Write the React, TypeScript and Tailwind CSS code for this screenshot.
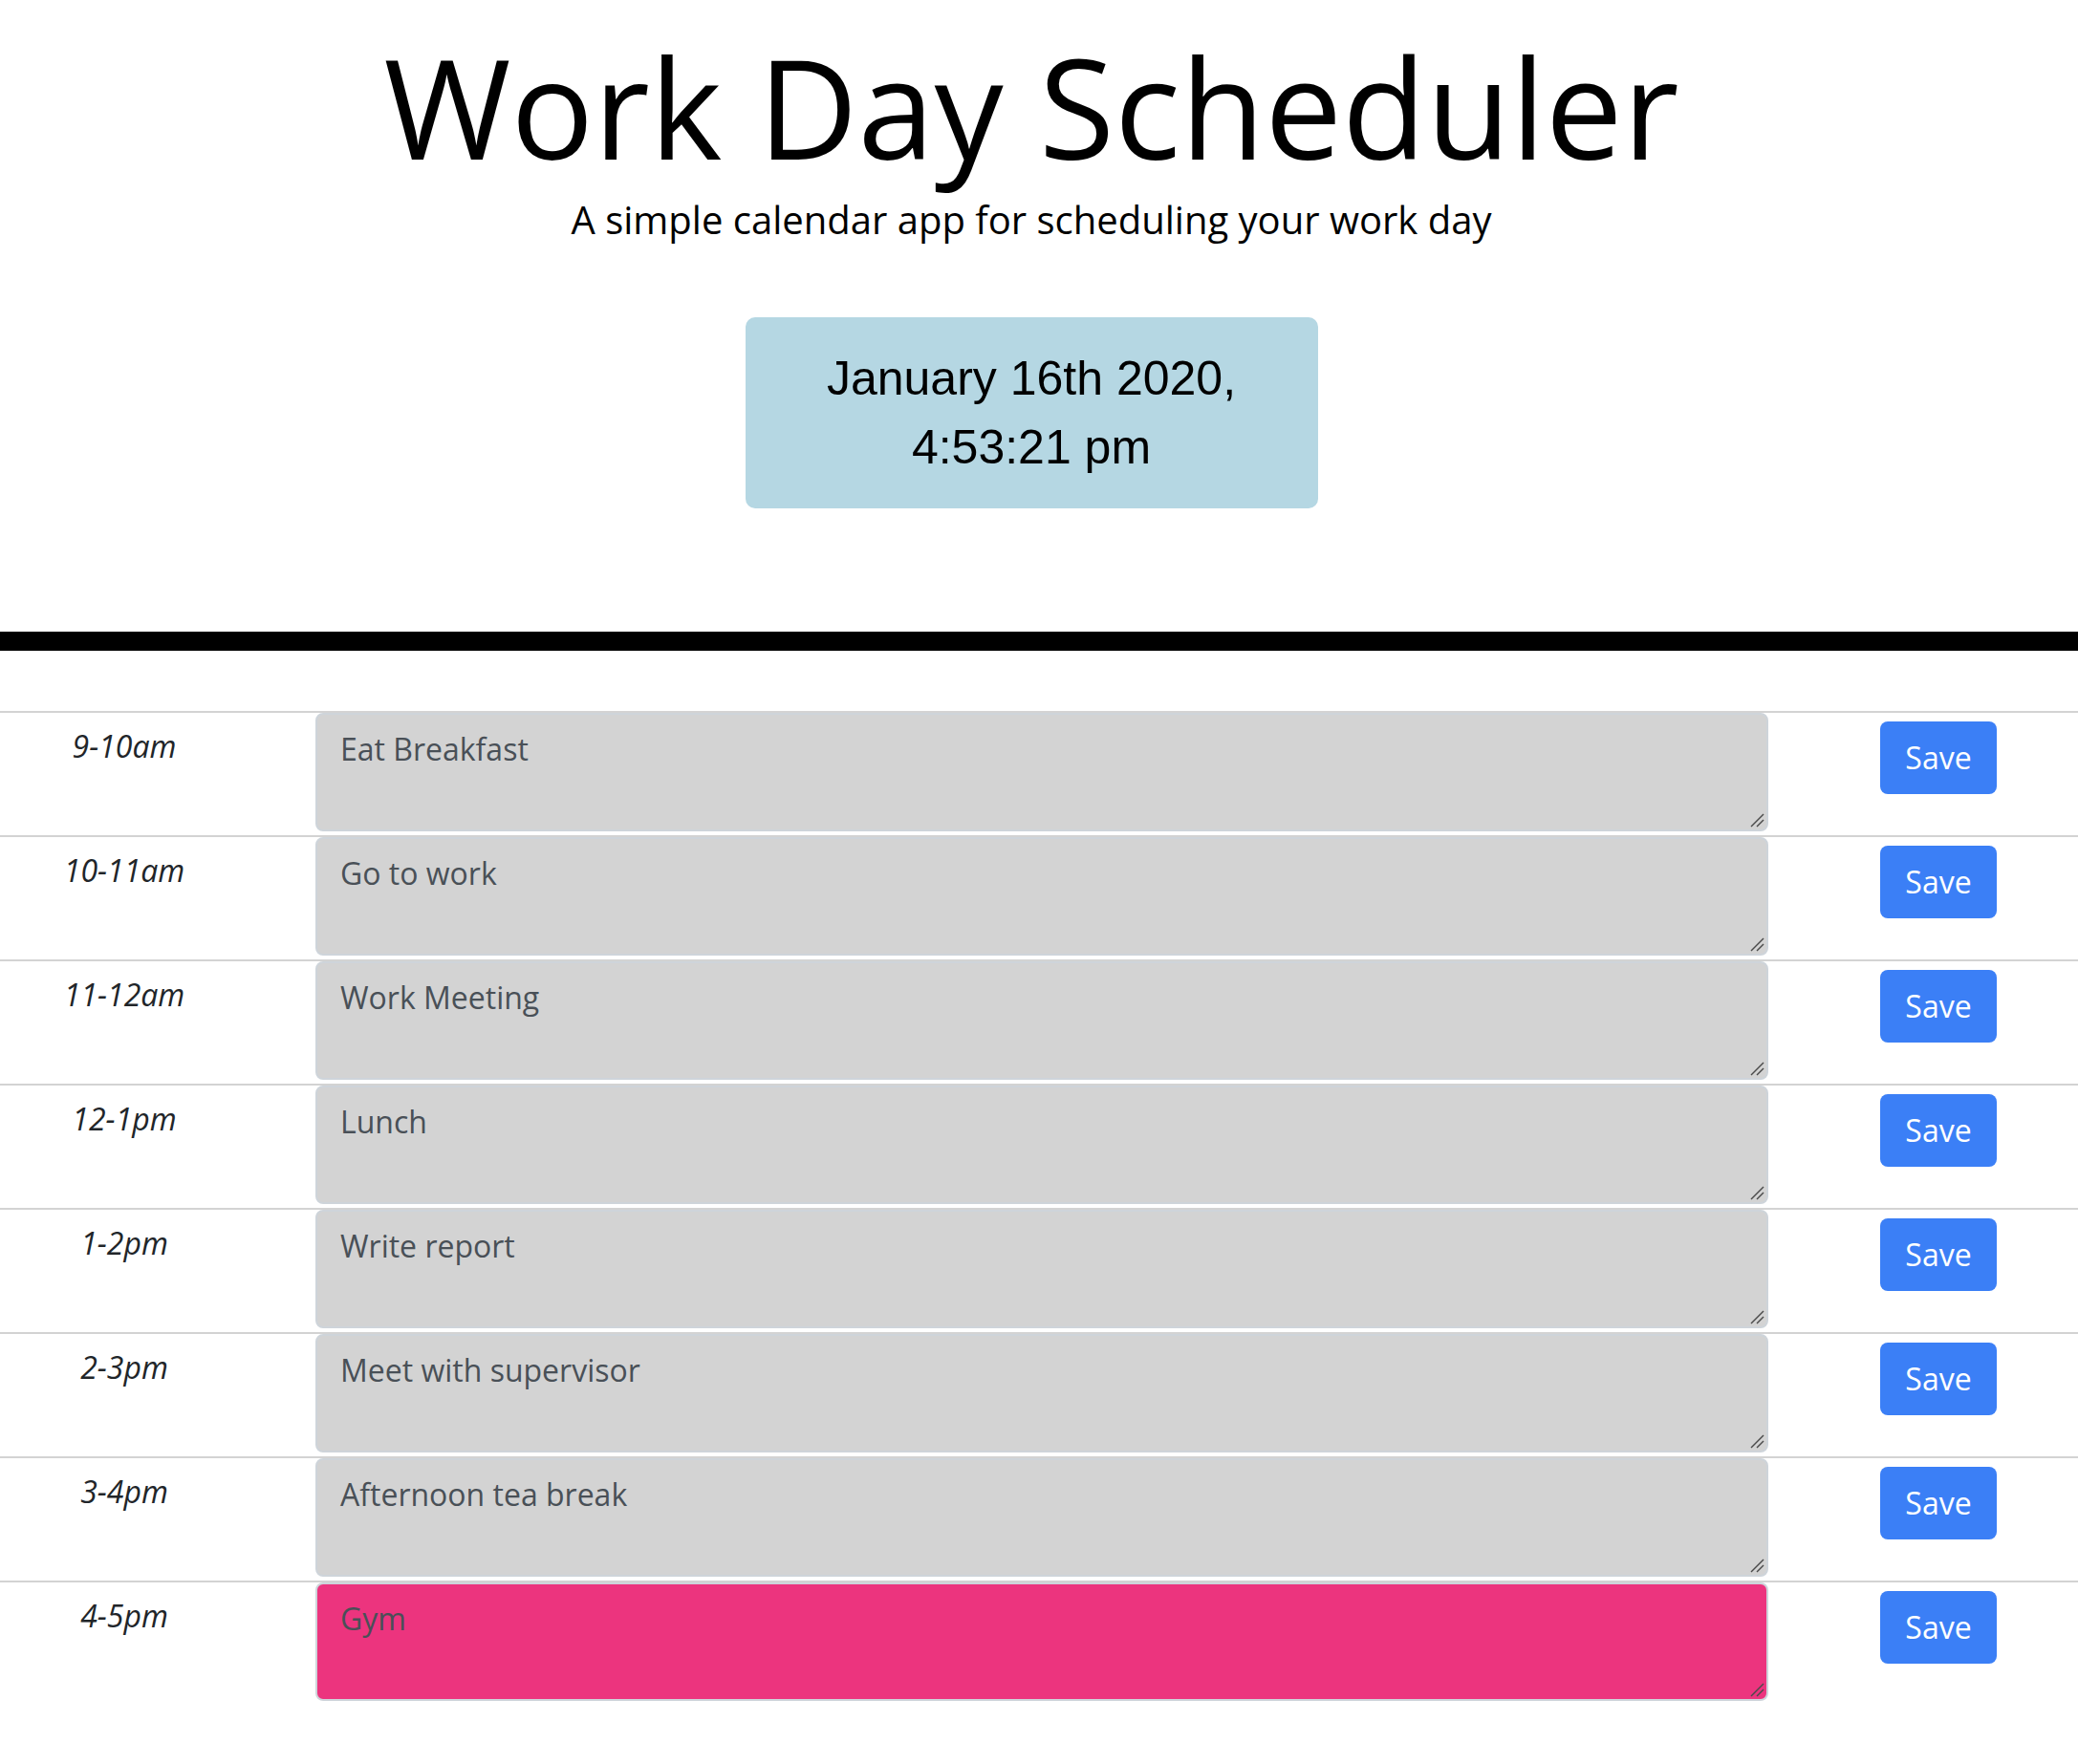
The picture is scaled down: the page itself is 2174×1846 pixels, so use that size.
import React from "react";

const rows = [
  { hour: "9-10am", text: "Eat Breakfast", present: false },
  { hour: "10-11am", text: "Go to work", present: false },
  { hour: "11-12am", text: "Work Meeting", present: false },
  { hour: "12-1pm", text: "Lunch", present: false },
  { hour: "1-2pm", text: "Write report", present: false },
  { hour: "2-3pm", text: "Meet with supervisor", present: false },
  { hour: "3-4pm", text: "Afternoon tea break", present: false },
  { hour: "4-5pm", text: "Gym", present: true },
];

function Grip() {
  return (
    <svg
      className="pointer-events-none absolute bottom-[4px] right-[4px]"
      width="16"
      height="16"
      viewBox="0 0 16 16"
    >
      <line x1="2" y1="15" x2="15" y2="2" stroke="#4a4a4a" strokeWidth="1.5" />
      <line x1="8" y1="15" x2="15" y2="8" stroke="#4a4a4a" strokeWidth="1.5" />
    </svg>
  );
}

export default function App() {
  return (
    <div className="min-h-[1846px] bg-white text-[#212529] font-['Open_Sans',sans-serif]">
      <header className="flex flex-col items-center pr-[16px] pt-[36px]">
        <h1 className="text-[144px] font-normal leading-[150px] text-black">Work Day Scheduler</h1>
        <p className="mt-[14px] text-[40px] leading-[60px] font-normal text-black">
          A simple calendar app for scheduling your work day
        </p>
        <div className="mt-[72px] w-[599px] rounded-[10px] bg-[#b5d7e3] pt-[28px] pb-[28px] text-center font-['Liberation_Sans',Arial,sans-serif] text-[50px] leading-[72px] text-black">
          <div>January 16th 2020,</div>
          <div>4:53:21 pm</div>
        </div>
      </header>
      <div className="mt-[129px] h-[20px] bg-black" />
      <main className="mt-[63px]">
        {rows.map((r) => (
          <div key={r.hour} className="flex border-t-2 border-[#d3d3d3] pb-[4px]">
            <div className="w-[330px] shrink-0 pr-[70px] pt-[11px] text-center text-[32px] italic leading-[48px] text-[#212529]">
              {r.hour}
            </div>
            <div className="relative flex-1">
              <textarea
                rows={2}
                defaultValue={r.text}
                className={
                  "block h-[124px] w-full resize-none rounded-[8px] border-2 border-[#ced4da] px-[24px] py-[12px] text-[32px] leading-[48px] text-[#495057] outline-none " +
                  (r.present ? "bg-[#ec347e]" : "bg-[#d3d3d3]")
                }
              />
              <Grip />
            </div>
            <div className="w-[324px] shrink-0 pl-[117px] pt-[9px]">
              <button className="h-[76px] w-[122px] rounded-[8px] bg-[#3b7ff6] text-[32px] leading-[48px] text-white">
                Save
              </button>
            </div>
          </div>
        ))}
      </main>
    </div>
  );
}
